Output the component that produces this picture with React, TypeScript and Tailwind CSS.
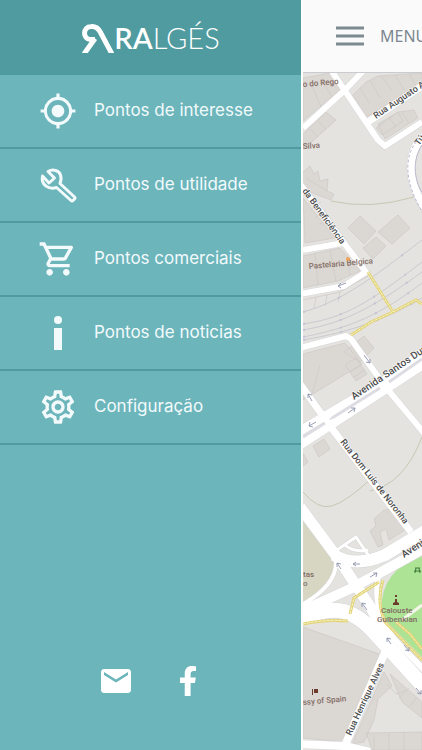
import { MdEmail, MdMyLocation, MdOutlineSettings, MdOutlineShoppingCart } from "react-icons/md";
import { FaFacebookF } from "react-icons/fa";

const InfoIcon = () => (
  <svg viewBox="0 0 40 40" className="h-10 w-10" fill="currentColor">
    <circle cx="20" cy="7" r="4" />
    <path d="M16 15h8v22h-8z" />
  </svg>
);

const WrenchIcon = () => (
  <svg
    viewBox="2 2 40 40"
    className="h-10 w-10"
    fill="none"
    stroke="currentColor"
    strokeWidth="3"
    strokeLinejoin="round"
  >
    <path d="M6.5 13 13 20l5.5-5L12 8.500C17 5.500 23 7.500 24.500 12c1 3 .5 6-.5 8.500L38.500 34q1 1 0 2l-1.500 1.500q-1 1-2 0L20.500 24.500C13 27 4.500 22 6.500 13Z" />
  </svg>
);

const links = [
  { label: "Pontos de interesse", icon: <MdMyLocation className="h-[38px] w-10" /> },
  { label: "Pontos de utilidade", icon: <WrenchIcon /> },
  { label: "Pontos comerciais", icon: <MdOutlineShoppingCart className="h-10 w-10" /> },
  { label: "Pontos de noticias", icon: <InfoIcon /> },
  { label: "Configuração", icon: <MdOutlineSettings className="h-10 w-10" /> },
];

const Logo = () => (
  <h1 className="flex items-center text-white">
    <svg viewBox="0 0 33 30" className="h-[30px] w-[33px]" fill="none" stroke="currentColor">
      <path d="M14 16.500H9.500C1.500 16 1.500 4 10 3.500 14 3 17 5 19 8.500L31 31" strokeWidth="5" />
      <path d="M14 15.500 3 31" strokeWidth="5" />
    </svg>
    <span className="font-[Lato] text-[29px] leading-[30px] font-semibold">
      RA<span className="font-light">LGÉS</span>
    </span>
  </h1>
);

const Sidebar = () => (
  <aside className="flex w-[301px] shrink-0 flex-col bg-[#6bb5bb]">
    <div className="flex h-[75px] items-center justify-center bg-[#4f9ba0]">
      <Logo />
    </div>
    <nav>
      {links.map((link) => (
        <a
          key={link.label}
          href="#"
          className="flex h-[74px] items-center gap-4 border-b-2 border-[#4f9ba0] pl-[38px] font-[Inter] text-[17px] text-[#f3fafb]"
        >
          {link.icon}
          {link.label}
        </a>
      ))}
    </nav>
    <div className="mt-auto flex items-center justify-center gap-11 pr-1.5 pb-[51px] text-white">
      <a href="#" aria-label="Email">
        <MdEmail className="h-9 w-9" />
      </a>
      <a href="#" aria-label="Facebook">
        <FaFacebookF className="h-[30px] w-5" />
      </a>
    </div>
  </aside>
);

const roads = [
  { d: "M331 70 378 140 385 146 422 122", w: 6 },
  { d: "M303 128 346 89 364 70", w: 6 },
  { d: "M368 122 422 86", w: 7 },
  { d: "M425 136C405 152 408 184 425 208", w: 8 },
  { d: "M300 184 347 247 366 272 344 286 300 294", w: 6 },
  { d: "M303 250 343 243", w: 6 },
  { d: "M300 348 346 336 351 339 384 385 424 433", w: 6 },
  { d: "M300 431 384 381 424 352", w: 9 },
  { d: "M300 445 424 364", w: 9 },
  { d: "M300 384 333 430 411 532", w: 7 },
  { d: "M334 552 356 537 371 559", w: 3 },
  { d: "M345 545Q354 553 368 550", w: 3 },
  { d: "M300 507 340 561 371 608 388 638", w: 11 },
  { d: "M425 531 385 555Q355 568 334 555", w: 12 },
  { d: "M425 548 385 570 352 588 300 612", w: 10 },
  { d: "M336 560Q338 585 300 606", w: 4 },
  { d: "M379 574Q372 600 386 628", w: 5 },
  { d: "M300 619C330 606 350 605 375 633L425 688", w: 15 },
  { d: "M378 618 395 640 425 671", w: 6 },
  { d: "M386 650 343 750", w: 8 },
  { d: "M300 744 345 746 370 752", w: 8 },
];

const buildings = [
  "M303 78 330 73 342 88 303 121z",
  "M352 96 366 82 378 76 422 73V82L373 114 362 118 358 102z",
  "M303 134 326 112 336 120 303 150z",
  "M376 128 398 112 403 121 382 135z",
  "M378 124 398 112 414 110 418 118 385 139z",
  "M303 172 310 166 314 174 318 171 320 181 328 179 327 191 334 194 331 200 300 188z",
  "M303 198 335 238 305 243z",
  "M348 228 360 216 376 231 364 244z",
  "M378 232 398 215 410 228 392 244z",
  "M363 248 376 237 386 246 373 259z",
  "M303 256 340 248 360 271 338 281 303 288z",
  "M344 352 364 336 374 348 360 362z",
  "M303 354 345 343 362 364 303 400z",
  "M345 365 356 358 367 374 356 381z",
  "M313 446 324 439 330 449 319 457z",
  "M303 453 308 462 303 466z",
  "M370 531 376 526 374 519 384 510 392 509 405 530 389 540 386 529 380 532 383 545 378 547z",
  "M303 627 382 655 343 742 303 738z",
  "M384 672 392 686 378 699 374 720 364 742 352 744z",
  "M390 674 422 702V718L402 702z",
  "M366 733 422 732V750H372z",
];

const details = [
  "M322 80 333 99M312 86 322 109M333 77 341 88",
  "M360 88 370 104M370 80 380 98M381 76 392 90M395 75 404 90M409 74 416 86",
  "M310 129 318 137M318 121 326 129M389 117 396 127M402 112 409 123",
  "M306 178 327 191M311 210 321 202M316 217 326 210M320 224 331 218",
  "M315 253 318 285M330 250 336 282M347 258 350 275",
  "M303 300 340 292 368 276M316 297 314 309M327 295 325 306M340 292 338 302",
  "M350 372 361 365M354 377 364 370M320 365 312 394",
  "M387 684 396 694 407 690M374 735V750M389 734V750M404 732V750",
  "M399 698 409 688M409 707 417 697",
];

const tracks = [
  "M303 312C340 302 370 280 422 240",
  "M303 324C345 318 370 302 422 262",
  "M303 330C350 322 380 302 422 272",
  "M303 337C350 328 380 315 422 283",
  "M303 340C350 332 385 320 422 298",
];

const paths = [
  "M368 272 393 312",
  "M351 335 371 322 393 312 416 300 422 304",
  "M303 624Q325 619 348 621",
  "M350 614 354 598 379 582",
  "M383 580Q376 602 385 622L422 660",
  "M396 622 410 634 422 649",
];

const arrows = [
  "M338 286l8-3M338 286l3-3M338 286l3 2",
  "M364 355l6 8M370 363v-4M370 363l-4-1",
  "M308 394l4 7M308 394v4M308 394l4 1",
  "M309 426l7-4M309 426l1-4M309 426l4 1",
  "M348 413l7-5M355 408h-4M355 408l-1 4",
  "M353 564h7M353 564l3-2M353 564l3 2",
  "M370 577l7-4M377 573h-4M377 573l-1 4",
  "M337 563l4 6M337 563v4M337 563l4 1",
  "M362 603l5 7M362 603v4M362 603l4 1",
  "M387 638l4 6M387 638v4M387 638l4 1",
  "M404 645l5 6M409 651v-4M409 651l-4-1",
  "M416 688l5 6M421 694v-4M421 694l-4-1",
];

const streets = [
  { name: "Rua Augusto Ab", x: 376, y: 119, angle: -34, size: 9 },
  { name: "da Beneficiência", x: 302, y: 191, angle: 54, size: 9 },
  { name: "Avenida Santos Dumont", x: 354, y: 400, angle: -34, size: 10 },
  { name: "Rua Dom Luís de Noronha", x: 340, y: 442, angle: 52, size: 9 },
  { name: "Avenida", x: 404, y: 558, angle: -33, size: 10 },
  { name: "Rua Henrique Alves", x: 351, y: 736, angle: -65, size: 9 },
  { name: "Tú", x: 419, y: 146, angle: -54, size: 9 },
];

const places = [
  { name: "o do Rego", x: 303, y: 87, angle: -5 },
  { name: "Silva", x: 303, y: 149, angle: -4 },
  { name: "Pastelaria Belgica", x: 309, y: 269, angle: -5 },
  { name: "tas", x: 303, y: 577, angle: 0 },
  { name: "o", x: 303, y: 586, angle: 0 },
  { name: "Calouste", x: 381, y: 613, angle: 0 },
  { name: "Gulbenkian", x: 377, y: 622, angle: 0 },
  { name: "ssy of Spain", x: 303, y: 705, angle: -5 },
];

const CityMap = () => (
  <svg
    viewBox="303 73 119 677"
    preserveAspectRatio="xMinYMin slice"
    className="w-full flex-1 bg-[#e4e3df] font-[Roboto]"
    fill="none"
  >
    <path d="M303 516 336 560Q336 584 303 602z" fill="#d6d6c3" />
    <path d="M422 556 398 569Q384 582 382 600 380 615 390 625L422 657z" fill="#ace395" />
    <path d={buildings.join("")} fill="#dbd7d3" stroke="#cfc9c5" strokeWidth="0.7" />
    <path d={details.join("")} stroke="#cfc9c5" strokeWidth="0.7" />
    <path d="M331 201Q370 210 414 197M422 437Q404 484 370 491M303 492Q318 510 332 506T372 478" stroke="#c6c9b3" />
    <path d={tracks.join("")} stroke="#cbcad0" />
    <path d={tracks.join("")} stroke="#c3c3d6" strokeWidth="2" strokeDasharray="2 36" />
    {roads.map((r) => (
      <path key={r.d} d={r.d} stroke="#d6d5d8" strokeWidth={r.w + 1} strokeLinejoin="round" />
    ))}
    {roads.map((r) => (
      <path key={r.d} d={r.d} stroke="#fff" strokeWidth={r.w} strokeLinejoin="round" />
    ))}
    <path d="M422 145C412 160 414 180 422 192" stroke="#bcbad0" />
    <path d="M420 138C402 154 405 184 422 211" stroke="#bcbad0" strokeDasharray="3 2" />
    <path d="M303 437 325 423M332 418 380 388M389 382 422 359" stroke="#dddce2" strokeWidth="3" />
    <path d={paths.join("")} stroke="#e2d478" strokeWidth="3" />
    <path d={paths.join("")} stroke="#f8f3c9" strokeWidth="1" strokeDasharray="3 1" />
    <path d="M402 620 422 605" stroke="#f3f6e8" strokeWidth="3" />
    <path d={arrows.join("")} stroke="#8d94ad" strokeWidth="0.9" />
    {streets.map((s) => (
      <text
        key={s.name}
        transform={`translate(${s.x} ${s.y}) rotate(${s.angle})`}
        fontSize={s.size}
        fontWeight="500"
        fill="#4c4c4c"
        stroke="#fff"
        strokeWidth="1"
        paintOrder="stroke"
      >
        {s.name}
      </text>
    ))}
    {places.map((p) => (
      <text
        key={p.name}
        transform={`translate(${p.x} ${p.y}) rotate(${p.angle})`}
        fontSize="8"
        fontWeight="500"
        fill="#836c64"
      >
        {p.name}
      </text>
    ))}
    {/* monument, picnic table, embassy flag */}
    <path d="M393 605v-2l2-1v-3h1v-2h-1v-2h2v2h-1v2h1v3l2 1v2z" fill="#6d3b2c" />
    <path d="M415 568h5M414 571h7M416 568l-1 5M419 568l1 5" stroke="#3d7a3b" />
    <path d="M312 689h1v6h-1zM314 689h4v4h-4z" fill="#6d3b2c" />
    <circle cx="348" cy="259" r="2" fill="#f0a45b" />
  </svg>
);

const App = () => {
  return (
    <div className="flex min-h-screen overflow-hidden bg-white font-['Noto_Sans',sans-serif]">
      <Sidebar />
      <main className="flex min-w-0 flex-1 flex-col overflow-hidden border-l-2 border-white">
        <header className="flex h-[73px] shrink-0 items-center border-b border-[#c9cbd0] bg-[#fafafa] pl-8">
          <button className="flex items-center gap-[15px] text-base text-[#7c8791]">
            <svg viewBox="0 0 30 20" className="h-5 w-[30px] shrink-0" stroke="#7d8a8f" strokeWidth="3">
              <path d="M1 2h28M1 10h28M1 18h28" />
            </svg>
            MENU
          </button>
        </header>
        <CityMap />
      </main>
    </div>
  );
};

export default App;
